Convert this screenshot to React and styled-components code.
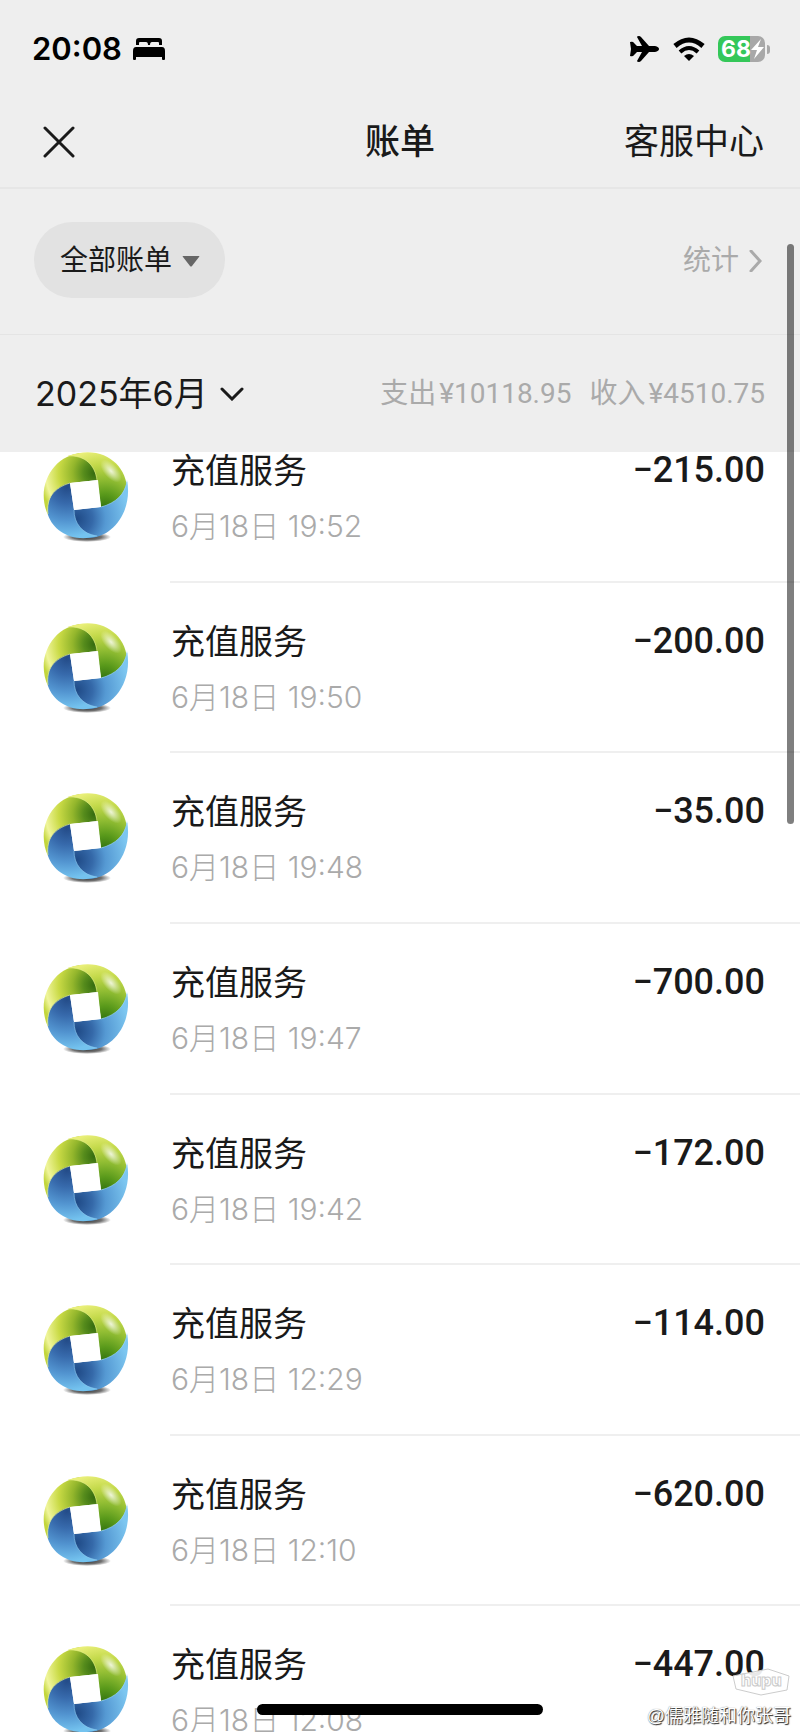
import React from 'react';
import styled, { createGlobalStyle } from 'styled-components';

const GlobalStyle = createGlobalStyle`
    * {
        box-sizing: border-box;
    }
    body {
        margin: 0;
        background: #fff;
        font-family: "Liberation Sans", "Noto Sans CJK SC", sans-serif;
        color: #1a1a1a;
    }
    button {
        border: none;
        padding: 0;
        background: none;
        font-family: inherit;
        color: inherit;
        cursor: pointer;
    }
    svg {
        display: block;
        flex-shrink: 0;
    }
`;

const Page = styled.div`
    position: relative;
    height: 100vh;
    display: flex;
    flex-direction: column;
    overflow: hidden;
`;

const Header = styled.header`
    flex-shrink: 0;
    background: #eee;
`;

const StatusBar = styled.div`
    height: 98px;
    padding: 0 30px 0 32px;
    display: flex;
    align-items: center;
    justify-content: space-between;
    color: #000;
`;

const StatusGroup = styled.div`
    display: flex;
    align-items: center;
    gap: ${({ gap }) => gap}px;
`;

const Clock = styled.span`
    font-family: Inter, sans-serif;
    font-size: 31px;
    font-weight: 600;
    line-height: 40px;
`;

const Battery = styled.div`
    display: flex;
    align-items: center;
    gap: 2px;
`;

const BatteryBody = styled.div`
    width: 47px;
    height: 26px;
    padding-left: 3px;
    border-radius: 7px;
    display: flex;
    align-items: center;
    background: linear-gradient(to right, #34c759 68%, #a8a8a8 68%);
    color: #fff;
    font-family: Inter, sans-serif;
    font-size: 23px;
    font-weight: 700;
    line-height: 26px;
`;

const BatteryTip = styled.div`
    width: 3px;
    height: 9px;
    border-radius: 0 4px 4px 0;
    background: #a8a8a8;
`;

const NavBar = styled.nav`
    height: 91px;
    padding: 0 36px 2px;
    border-bottom: 2px solid #e6e6e6;
    display: grid;
    grid-template-columns: 1fr auto 1fr;
    align-items: center;
`;

const CloseButton = styled.button`
    justify-self: start;
    && {
        padding: 0 7px;
    }
`;

const Title = styled.h1`
    margin: 0;
    font-size: 35px;
    font-weight: 500;
    line-height: 48px;
`;

const ServiceButton = styled.button`
    justify-self: end;
    font-size: 35px;
    line-height: 48px;
`;

const FilterBar = styled.div`
    height: 146px;
    padding: 0 38px 3px 34px;
    border-bottom: 1px solid #e4e4e4;
    display: flex;
    align-items: center;
    justify-content: space-between;
`;

const FilterButton = styled.button`
    height: 76px;
    && {
        padding: 2px 25px 0 26px;
        background: #e2e2e2;
    }
    border-radius: 38px;
    display: flex;
    align-items: center;
    gap: 10px;
    font-size: 28px;
    line-height: 40px;
`;

const StatsButton = styled.button`
    display: flex;
    align-items: center;
    gap: 10px;
    font-size: 28px;
    line-height: 40px;
    && {
        padding-top: 2px;
        color: #aaa;
    }
`;

const MonthBar = styled.div`
    height: 117px;
    padding: 0 35px;
    display: flex;
    align-items: center;
    justify-content: space-between;
`;

const MonthButton = styled.button`
    display: flex;
    align-items: center;
    gap: 12px;
    && {
        font-family: Inter, "Noto Sans CJK SC", sans-serif;
    }
    font-size: 34px;
    line-height: 48px;
`;

const Totals = styled.div`
    display: flex;
    gap: 18px;
    font-family: Roboto, "Noto Sans CJK SC", sans-serif;
    font-size: 28px;
    line-height: 40px;
    color: #aaa;
`;

const Total = styled.span`
    display: flex;
    gap: 3px;
`;

const BillList = styled.main`
    flex: 1;
    min-height: 0;
    overflow: hidden;
`;

const Bills = styled.ul`
    margin: -40px 0 0;
    padding: 0;
    min-height: 1365px;
    display: grid;
    grid-auto-rows: 1fr;
    list-style: none;
`;

const Bill = styled.li`
    padding-left: 41px;
    display: flex;
`;

const BillIcon = styled.div`
    padding-top: 39px;
    width: 129px;
`;

const BillBody = styled.div`
    flex: 1;
    padding: 34px 35px 0 1px;
    border-bottom: 2px solid #efefef;
    display: flex;
    justify-content: space-between;
`;

const BillName = styled.div`
    font-size: 34px;
    line-height: 50px;
`;

const BillTime = styled.time`
    display: block;
    margin-top: 10px;
    font-family: Inter, "Noto Sans CJK SC", sans-serif;
    font-size: 30px;
    font-weight: 300;
    line-height: 40px;
    color: #aaa;
`;

const Amount = styled.span`
    font-family: Roboto, sans-serif;
    font-size: 36px;
    font-weight: 500;
    line-height: 48px;
`;

const ScrollThumb = styled.div`
    position: absolute;
    top: 244px;
    right: 6px;
    width: 7px;
    height: 580px;
    border-radius: 4px;
    background: rgba(0, 0, 0, 0.5);
`;

const HomeIndicator = styled.div`
    position: absolute;
    bottom: 17px;
    left: 50%;
    width: 286px;
    height: 11px;
    margin-left: -143px;
    border-radius: 6px;
    background: #000;
`;

const Watermark = styled.div`
    position: absolute;
    right: 9px;
    bottom: 2px;
    display: flex;
    flex-direction: column;
    align-items: flex-end;
    gap: 6px;
`;

const Author = styled.span`
    color: #fff;
    font-size: 18px;
    line-height: 28px;
    text-shadow: 1px 1px 1px #222, 0 0 1px #777;
`;

const BedIcon = () => (
    <svg width="34" height="24" viewBox="0 0 34 24" aria-hidden="true">
        <path d="M4 8V4Q4 1 7 1H27Q30 1 30 4V8H27V6Q27 5 26 5H20Q18 5 18 8H16Q16 5 14 5H8Q7 5 7 6V8Z" />
        <path d="M4 10H30Q33 10 33 14V22Q33 23 32 23H31Q30 23 30 22V20H4V22Q4 23 3 23H2Q1 23 1 22V14Q1 10 4 10Z" />
    </svg>
);

const PlaneIcon = () => (
    <svg width="30" height="26" viewBox="0 0 30 26" aria-hidden="true">
        <path d="M0 6Q3 5 4 7L7 10H12L7 1Q7 0 9 0Q10 0 11 1L19 10H25Q29 11 29 13Q29 15 25 16H19L11 25Q10 26 9 26Q7 26 7 25L12 16H7L4 19Q3 21 0 20L1 13Z" />
    </svg>
);

const WifiIcon = () => (
    <svg width="32" height="25" viewBox="0 0 32 25" fill="none" stroke="#000" strokeWidth="5" aria-hidden="true">
        <path d="M2 9Q16-3 30 9" />
        <path d="M7 15Q16 7 25 15" strokeWidth="4" />
        <path d="M11 19Q16 15 21 19L16 24Z" fill="#000" stroke="none" />
    </svg>
);

const BoltIcon = () => (
    <svg width="13" height="20" viewBox="0 0 13 20" fill="#fff" aria-hidden="true">
        <path d="M10 0L0 11H6L3 20L13 8H7Z" />
    </svg>
);

const CloseIcon = () => (
    <svg width="32" height="32" viewBox="0 0 32 32" stroke="#1a1a1a" strokeWidth="3" strokeLinecap="round">
        <path d="M2 2L30 30M30 2L2 30" />
    </svg>
);

const TriangleIcon = () => (
    <svg width="18" height="11" viewBox="0 0 18 11" fill="#666">
        <path d="M1 0H17Q18 0 17 1L10 10Q9 11 8 10L1 1Q0 0 1 0Z" />
    </svg>
);

const ChevronRight = () => (
    <svg width="13" height="22" viewBox="0 0 13 22" fill="none" stroke="#aaa" strokeWidth="3" strokeLinecap="round">
        <path d="M2 1L11 11L2 21" />
    </svg>
);

const ChevronDown = () => (
    <svg width="24" height="14" viewBox="0 0 24 14" fill="none" stroke="#1a1a1a" strokeWidth="3" strokeLinecap="round">
        <path d="M2 2L12 12L22 2" />
    </svg>
);

const RechargeIcon = () => (
    <svg width="90" height="92" viewBox="0 0 90 92" aria-hidden="true">
        <use href="#recharge" />
    </svg>
);

const HiddenSvg = styled.svg`
    position: absolute;
`;

const RechargeSymbol = () => (
    <HiddenSvg width="0" height="0" aria-hidden="true">
        <defs>
            <radialGradient id="lime" gradientUnits="userSpaceOnUse" cx="54" cy="22" r="56">
                <stop offset="0" stopColor="#33690f" />
                <stop offset="0.2" stopColor="#568c1c" />
                <stop offset="0.4" stopColor="#93b62c" />
                <stop offset="0.65" stopColor="#c9da45" />
                <stop offset="0.88" stopColor="#f0f59c" />
                <stop offset="1" stopColor="#c3d63c" />
            </radialGradient>
            <radialGradient id="leaf" gradientUnits="userSpaceOnUse" cx="64" cy="58" r="60">
                <stop offset="0" stopColor="#2f6f0e" />
                <stop offset="0.25" stopColor="#5a9a1b" />
                <stop offset="0.5" stopColor="#91bd33" />
                <stop offset="0.75" stopColor="#c3d94a" />
                <stop offset="1" stopColor="#e9ef79" />
            </radialGradient>
            <radialGradient id="sky" gradientUnits="userSpaceOnUse" cx="36" cy="68" r="52">
                <stop offset="0" stopColor="#1f4a86" />
                <stop offset="0.3" stopColor="#3569a9" />
                <stop offset="0.55" stopColor="#5599d3" />
                <stop offset="1" stopColor="#7cc6f0" />
            </radialGradient>
            <radialGradient id="ocean" gradientUnits="userSpaceOnUse" cx="26" cy="36" r="56">
                <stop offset="0" stopColor="#234b88" />
                <stop offset="0.3" stopColor="#376aac" />
                <stop offset="0.6" stopColor="#5294d0" />
                <stop offset="0.9" stopColor="#74c3ef" />
            </radialGradient>
            <radialGradient id="shine">
                <stop offset="0" stopColor="#fff" stopOpacity="0.8" />
                <stop offset="1" stopColor="#fff" stopOpacity="0" />
            </radialGradient>
            <radialGradient id="shade">
                <stop offset="0" stopColor="#333" />
                <stop offset="0.6" stopColor="#333" stopOpacity="0.7" />
                <stop offset="1" stopColor="#333" stopOpacity="0" />
            </radialGradient>
        </defs>
        <symbol id="recharge" viewBox="0 0 90 92">
            <ellipse cx="46" cy="86" rx="24" ry="5" fill="url(#shade)" />
            <path d="M7 64C-6 36 12 3 42 2C52 6 57 15 57 29L29 32C13 37 5 47 7 64Z" fill="url(#lime)" />
            <path d="M27 5C62-8 87 15 86 40C82 49 74 54 60 56L56 29C54 14 44 4 27 5Z" fill="url(#leaf)" />
            <path d="M86 29C92 60 72 87 47 87C37 82 31 71 33 59L60 56C75 52 84 43 86 29Z" fill="url(#sky)" />
            <path d="M7 64C5 47 13 36 29 32L33 59C33 72 41 83 57 85C32 92 13 81 7 64Z" fill="url(#ocean)" />
            <g fill="none" strokeOpacity="0.6">
                <path d="M27 5C44 4 54 14 56 29" stroke="#e6f08a" />
                <path d="M7 63C5 47 13 37 29 32" stroke="#e6f08a" />
                <path d="M60 56C75 52 84 43 86 31" stroke="#9ad4f5" />
                <path d="M33 59C33 72 41 83 56 85" stroke="#8fcbf0" />
            </g>
            <ellipse cx="70" cy="20" rx="7" ry="14" transform="rotate(-42 70 20)" fill="url(#shine)" />
            <path d="M29 32L57 29L60 56L33 59Z" fill="#fff" />
        </symbol>
    </HiddenSvg>
);

const HupuLogo = () => (
    <svg width="60" height="28" viewBox="0 0 60 28" fill="#fff" fillOpacity="0.9" stroke="#ccc">
        <path d="M2 8L37 1L58 8L56 22L30 27L5 21Z" />
        <text x="10" y="18" fontFamily="Inter, sans-serif" fontSize="16" fontWeight="800">hupu</text>
    </svg>
);

const bills = [
    { time: '6月18日 19:52', amount: '−215.00' },
    { time: '6月18日 19:50', amount: '−200.00' },
    { time: '6月18日 19:48', amount: '−35.00' },
    { time: '6月18日 19:47', amount: '−700.00' },
    { time: '6月18日 19:42', amount: '−172.00' },
    { time: '6月18日 12:29', amount: '−114.00' },
    { time: '6月18日 12:10', amount: '−620.00' },
    { time: '6月18日 12:08', amount: '−447.00' },
];

const App = () => {
  return (
    <Page>
        <GlobalStyle />
        <RechargeSymbol />
        <Header>
            <StatusBar>
                <StatusGroup gap={10}>
                    <Clock>20:08</Clock>
                    <BedIcon />
                </StatusGroup>
                <StatusGroup gap={13}>
                    <PlaneIcon />
                    <WifiIcon />
                    <Battery>
                        <BatteryBody>68<BoltIcon /></BatteryBody>
                        <BatteryTip />
                    </Battery>
                </StatusGroup>
            </StatusBar>
            <NavBar>
                <CloseButton aria-label="关闭"><CloseIcon /></CloseButton>
                <Title>账单</Title>
                <ServiceButton>客服中心</ServiceButton>
            </NavBar>
            <FilterBar>
                <FilterButton>全部账单<TriangleIcon /></FilterButton>
                <StatsButton>统计<ChevronRight /></StatsButton>
            </FilterBar>
            <MonthBar>
                <MonthButton>2025年6月<ChevronDown /></MonthButton>
                <Totals>
                    <Total><span>支出</span><span>¥10118.95</span></Total>
                    <Total><span>收入</span><span>¥4510.75</span></Total>
                </Totals>
            </MonthBar>
        </Header>
        <BillList>
            <Bills>
                {bills.map((bill) => (
                    <Bill key={bill.time}>
                        <BillIcon><RechargeIcon /></BillIcon>
                        <BillBody>
                            <div>
                                <BillName>充值服务</BillName>
                                <BillTime>{bill.time}</BillTime>
                            </div>
                            <Amount>{bill.amount}</Amount>
                        </BillBody>
                    </Bill>
                ))}
            </Bills>
        </BillList>
        <ScrollThumb />
        <HomeIndicator />
        <Watermark>
            <HupuLogo />
            <Author>@儒雅随和你张哥</Author>
        </Watermark>
    </Page>
  )
}

export default App
